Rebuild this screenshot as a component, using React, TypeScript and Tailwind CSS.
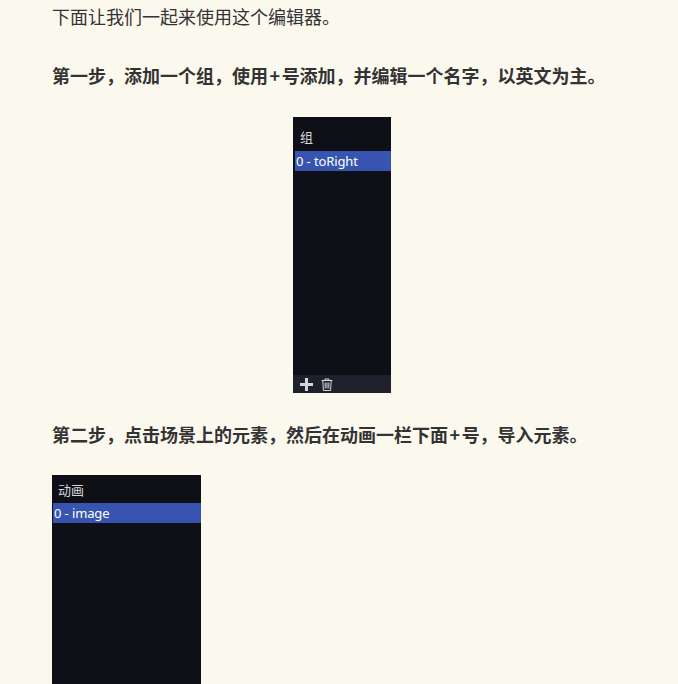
import React from 'react';

const cjk = '[font-family:"Microsoft_YaHei","Noto_Sans_CJK_SC","Noto_Sans",sans-serif]';

function PanelRow({ label }: { label: string }) {
  return (
    <div className="h-5 bg-[#3755b0] pl-px text-[13px] leading-5 tracking-[-0.12px] text-white [font-family:'Noto_Sans','Noto_Sans_CJK_SC',sans-serif]">
      {label}
    </div>
  );
}

function TrashIcon() {
  return (
    <svg width="12" height="13" viewBox="0 0 12 13" fill="none" stroke="#d5d6da" strokeWidth="1">
      <path d="M0.5 2.5h11M4 2.5V1h4v1.5M1.8 2.5l.6 10h7.2l.6-10M4.2 4.5v6M6 4.5v6M7.8 4.5v6" />
    </svg>
  );
}

export default function App() {
  return (
    <div className={`h-[684px] w-[678px] overflow-hidden bg-[#fbf8ee] text-[18px] text-[#333333] ${cjk}`}>
      <div className="flex w-[580px] ml-[52px] flex-col">
        <p className="mt-[2px] h-7 leading-7">下面让我们一起来使用这个编辑器。</p>

        <p className="mt-[31px] h-7 font-bold leading-7">
          第一步，添加一个组，使用<span className="mx-[1.5px]">+</span>号添加，并编辑一个名字，以英文为主。
        </p>

        <div className="mt-[28px] flex h-[276px] w-[98px] flex-col self-center bg-[#0f0f17] pl-0.5">
          <div className="flex h-[34px] items-end pb-[5px] pl-[5px] text-[13px] leading-[18px] text-[#d8d8da]">组</div>
          <PanelRow label="0 - toRight" />
          <div className="flex-1" />
          <div className="-ml-0.5 flex h-[18px] items-center gap-2 bg-[#20202c] pl-[7px]">
            <svg width="13" height="13" viewBox="0 0 13 13" fill="#d5d6da">
              <path d="M5 0h3v5h5v3H8v5H5V8H0V5h5z" />
            </svg>
            <TrashIcon />
          </div>
        </div>

        <p className="mt-[27px] h-7 font-bold leading-7">
          第二步，点击场景上的元素，然后在动画一栏下面<span className="mx-[1.5px]">+</span>号，导入元素。
        </p>

        <div className="mt-[27px] h-[300px] w-[149px] bg-[#0f0f17] pl-px">
          <div className="flex h-7 items-end pb-[4px] pl-[5px] text-[13px] leading-[18px] text-[#d8d8da]">动画</div>
          <PanelRow label="0 - image" />
        </div>
      </div>
    </div>
  );
}
